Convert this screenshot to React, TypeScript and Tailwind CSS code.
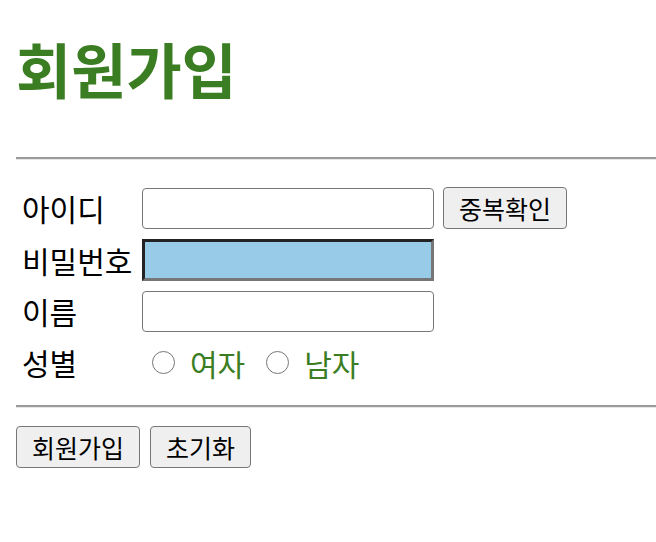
import { useState } from 'react'

const font = { fontFamily: '"Noto Sans CJK KR", "Noto Sans", sans-serif' }

function Radio({ label, checked, onClick }: { label: string; checked: boolean; onClick: () => void }) {
  return (
    <label className="flex items-center cursor-pointer" onClick={onClick}>
      <span className="w-[23px] h-[23px] rounded-full border-[1.5px] border-[#767676] bg-white flex items-center justify-center">
        {checked && <span className="w-[13px] h-[13px] rounded-full bg-[#1a73e8]" />}
      </span>
      <span className="ml-[15px] text-[30px] leading-[40px] text-[#3b7d23]">{label}</span>
    </label>
  )
}

export default function App() {
  const [gender, setGender] = useState('')
  const [id, setId] = useState('')
  const [pw, setPw] = useState('')
  const [name, setName] = useState('')

  const reset = () => {
    setGender('')
    setId('')
    setPw('')
    setName('')
  }

  return (
    <div className="bg-white min-h-[542px] pl-4 text-black overflow-hidden" style={font}>
      <h1 className="pt-[29px] text-[60px] leading-[78px] font-bold text-[#3b7d23]">회원가입</h1>

      <div className="mt-[50px] h-[3px] border-t-2 border-t-[#9b9b9b] border-b border-b-[#e6e6e6]" />

      <form onSubmit={(e) => e.preventDefault()} className="pt-[27px]">
        <div className="grid grid-cols-[120px_auto] items-center gap-y-[10px] pl-[6px]">
          <span className="text-[30px] leading-[41px]">아이디</span>
          <div className="flex items-center gap-[9px]">
            <input
              value={id}
              onChange={(e) => setId(e.target.value)}
              className="w-[292px] h-[41px] border border-[#767676] rounded-[4px] bg-white px-2 text-[20px] outline-none"
            />
            <button type="button" className="h-[42px] px-[15px] border border-[#767676] rounded-[4px] bg-[#efefef] text-[25px] leading-[30px]">
              중복확인
            </button>
          </div>

          <span className="text-[30px] leading-[41px]">비밀번호</span>
          <input
            type="password"
            value={pw}
            onChange={(e) => setPw(e.target.value)}
            className="w-[292px] h-[42px] border-[3px] border-t-[#222222] border-l-[#222222] border-b-[#767676] border-r-[#767676] bg-[#97cbe7] px-2 text-[20px] outline-none"
          />

          <span className="text-[30px] leading-[41px]">이름</span>
          <input
            value={name}
            onChange={(e) => setName(e.target.value)}
            className="w-[292px] h-[41px] border border-[#767676] rounded-[4px] bg-white px-2 text-[20px] outline-none"
          />

          <span className="text-[30px] leading-[41px]">성별</span>
          <div className="flex items-center gap-[21px] pl-[10px]">
            <Radio label="여자" checked={gender === 'f'} onClick={() => setGender('f')} />
            <Radio label="남자" checked={gender === 'm'} onClick={() => setGender('m')} />
          </div>
        </div>

        <div className="mt-[22px] h-[3px] border-t-2 border-t-[#9b9b9b] border-b border-b-[#e6e6e6]" />

        <div className="flex gap-[10px] mt-[18px]">
          <button type="submit" className="h-[42px] px-[15px] border border-[#767676] rounded-[4px] bg-[#efefef] text-[25px] leading-[30px]">
            회원가입
          </button>
          <button type="button" onClick={reset} className="h-[42px] px-[15px] border border-[#767676] rounded-[4px] bg-[#efefef] text-[25px] leading-[30px]">
            초기화
          </button>
        </div>
      </form>
    </div>
  )
}
